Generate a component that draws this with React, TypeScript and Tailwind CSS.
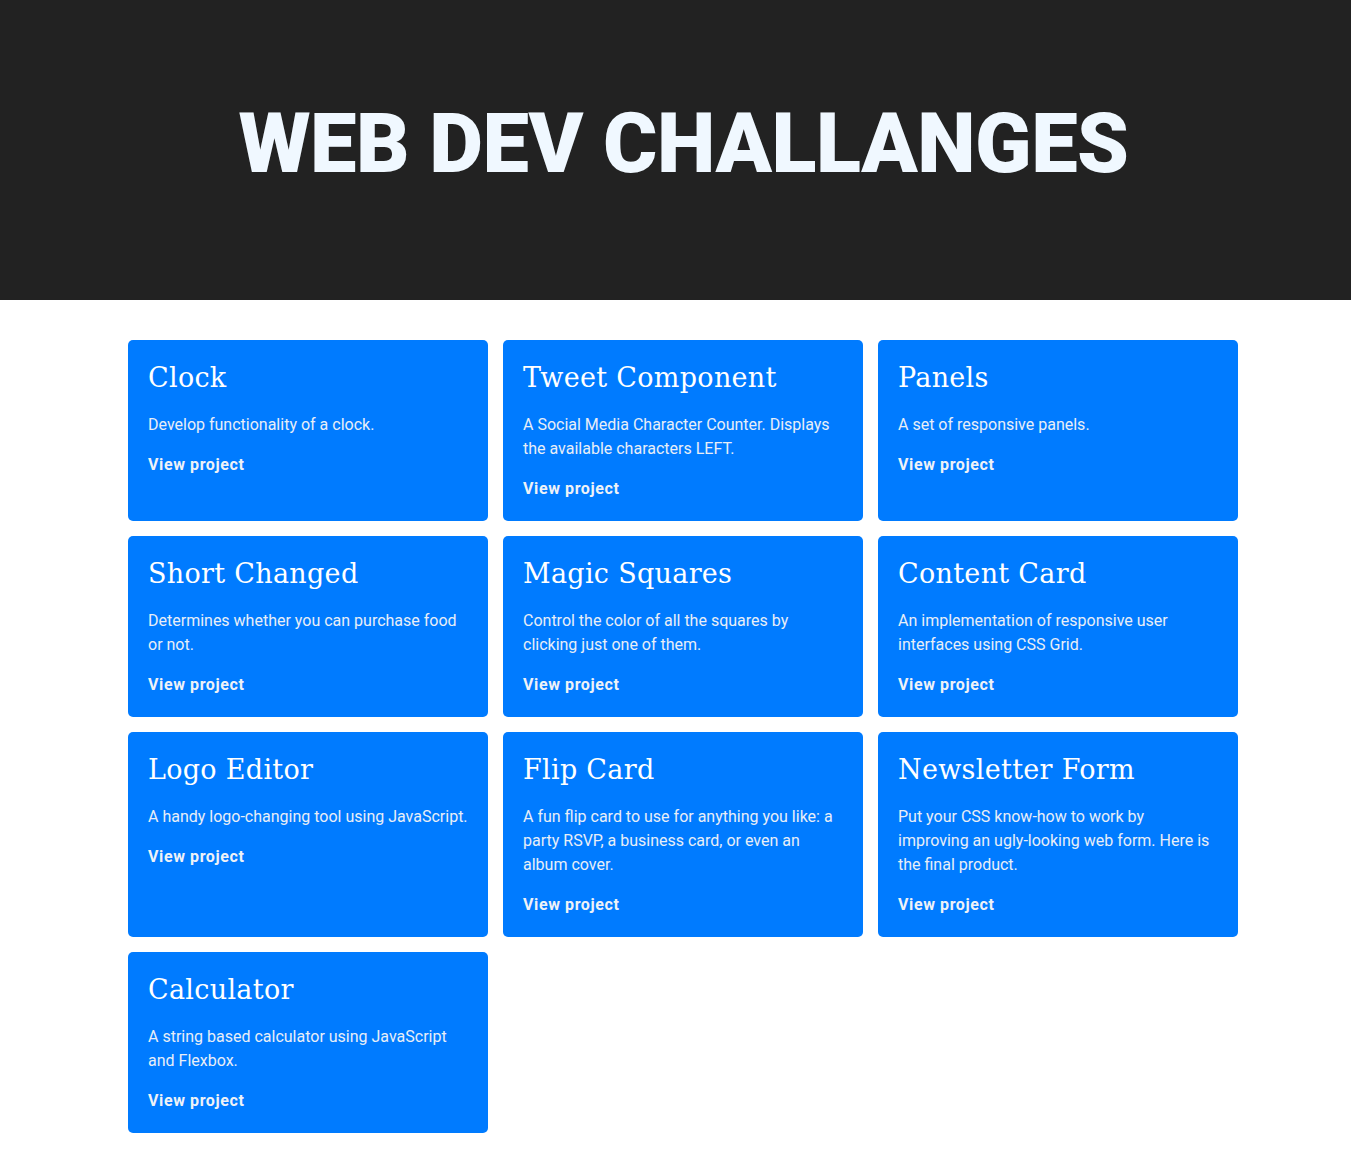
import React from "react";

type Project = {
  title: string;
  text: string;
};

const projects: Project[] = [
  { title: "Clock", text: "Develop functionality of a clock." },
  {
    title: "Tweet Component",
    text: "A Social Media Character Counter. Displays the available characters LEFT.",
  },
  { title: "Panels", text: "A set of responsive panels." },
  {
    title: "Short Changed",
    text: "Determines whether you can purchase food or not.",
  },
  {
    title: "Magic Squares",
    text: "Control the color of all the squares by clicking just one of them.",
  },
  {
    title: "Content Card",
    text: "An implementation of responsive user interfaces using CSS Grid.",
  },
  { title: "Logo Editor", text: "A handy logo-changing tool using JavaScript." },
  {
    title: "Flip Card",
    text: "A fun flip card to use for anything you like: a party RSVP, a business card, or even an album cover.",
  },
  {
    title: "Newsletter Form",
    text: "Put your CSS know-how to work by improving an ugly-looking web form. Here is the final product.",
  },
  {
    title: "Calculator",
    text: "A string based calculator using JavaScript and Flexbox.",
  },
];

const Card = ({ title, text }: Project) => (
  <div className="rounded-[5px] bg-[#007bff] px-5 pt-5 pb-5">
    <h2 className="mb-[17px] font-['DejaVu_Serif',serif] text-[27px] leading-[36px] tracking-[0.3px] text-white">
      {title}
    </h2>
    <p className="mb-4 text-base leading-6 text-[#e8eef7]">{text}</p>
    <a href="#" className="text-base leading-6 font-bold tracking-[0.6px] text-[#eef2f7]">
      View project
    </a>
  </div>
);

export default function App() {
  return (
    <div className="min-h-screen bg-white font-['Roboto',sans-serif]">
      {/* Header */}
      <header className="flex h-[300px] items-center justify-center bg-[#222222] pb-3 pl-4">
        <h1 className="font-['Roboto',sans-serif] text-[83px] font-black tracking-[-0.5px] text-[#f0f8ff]">
          WEB DEV CHALLANGES
        </h1>
      </header>
      {/* Cards */}
      <main className="ml-[128px] grid w-[1110px] grid-cols-3 gap-[15px] pt-10 pb-8">
        {projects.map((p) => (
          <Card key={p.title} {...p} />
        ))}
      </main>
    </div>
  );
}
